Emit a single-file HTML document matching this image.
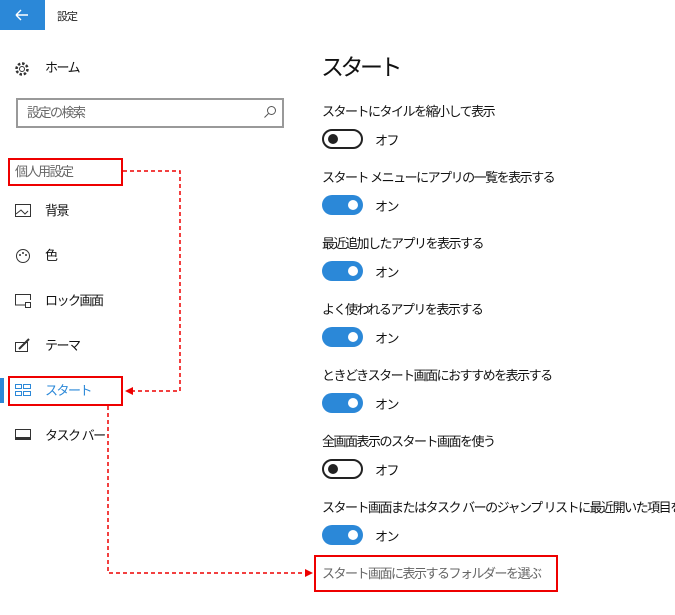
<!DOCTYPE html>
<html><head><meta charset="utf-8"><style>
*{margin:0;padding:0;box-sizing:border-box}
body{width:675px;height:615px;background:#fff;position:relative;overflow:hidden;font-family:"Liberation Sans","Noto Sans CJK JP",sans-serif;color:#111}
.a{position:absolute;white-space:nowrap}
.t{font-size:13px;line-height:18px;letter-spacing:-1.5px}
.tg{position:absolute;left:322px;width:41px;height:20px;border-radius:10px}
.on{background:#2b88d8}
.on::after{content:"";position:absolute;right:5px;top:5px;width:10px;height:10px;border-radius:5px;background:#fff}
.off{border:2px solid #222}
.off::after{content:"";position:absolute;left:4px;top:3px;width:10px;height:10px;border-radius:5px;background:#222}
.st{font-size:13px;left:375px;letter-spacing:-1.5px}
</style></head><body>
<div class="a" style="left:0;top:0;width:45px;height:30px;background:#2b88d8"></div>
<svg class="a" style="left:14px;top:8px" width="16" height="14"><path d="M2 7H14M2 7L7 2M2 7L7 12" stroke="#fff" stroke-width="1.4" fill="none"/></svg>
<div class="a" style="left:57px;top:8px;font-size:11px;color:#222;letter-spacing:-1px">設定</div>
<svg class="a" style="left:14px;top:61px" width="16" height="16" viewBox="0 0 16 16"><circle cx="8" cy="8" r="2.5" fill="none" stroke="#333"/><circle cx="8" cy="8" r="5.5" fill="none" stroke="#333" stroke-dasharray="2.5 1.8" stroke-width="2.5"/></svg>
<div class="a t" style="left:45px;top:59px">ホーム</div>
<div class="a" style="left:16px;top:98px;width:268px;height:30px;border:2px solid #999"></div>
<div class="a t" style="left:27px;top:104px;color:#666">設定の検索</div>
<svg class="a" style="left:263px;top:105px" width="14" height="14"><circle cx="8.5" cy="5.5" r="4" fill="none" stroke="#555"/><path d="M5.5 8.5L1.5 12.5" stroke="#555"/></svg>
<div class="a" style="left:8px;top:158px;width:115px;height:28px;border:2px solid #e00"></div>
<div class="a t" style="left:15px;top:163px;color:#666">個人用設定</div>
<svg class="a" style="left:15px;top:204px" width="16" height="13"><rect x="0.5" y="0.5" width="15" height="12" fill="none" stroke="#333"/><path d="M1 10L6 6L10 10L13 7" fill="none" stroke="#333"/></svg>
<div class="a t" style="left:45px;top:202px">背景</div>
<svg class="a" style="left:15px;top:248px" width="16" height="16"><circle cx="8" cy="8" r="6.5" fill="none" stroke="#333"/><circle cx="5" cy="7" r="1" fill="#333"/><circle cx="8" cy="5" r="1" fill="#333"/><circle cx="11" cy="7" r="1" fill="#333"/></svg>
<div class="a t" style="left:45px;top:247px">色</div>
<svg class="a" style="left:15px;top:294px" width="16" height="14"><path d="M10 11H0.5V0.5H15.5V6" fill="none" stroke="#333"/><rect x="10.5" y="8.5" width="5" height="5" fill="none" stroke="#333"/></svg>
<div class="a t" style="left:45px;top:292px">ロック画面</div>
<svg class="a" style="left:15px;top:338px" width="16" height="16"><rect x="0.5" y="4.5" width="12" height="9" fill="none" stroke="#333"/><path d="M4 11L14 1" stroke="#333" stroke-width="2"/></svg>
<div class="a t" style="left:45px;top:337px">テーマ</div>
<div class="a" style="left:0;top:378px;width:4px;height:25px;background:#2b88d8"></div>
<div class="a" style="left:8px;top:376px;width:115px;height:30px;border:2px solid #e00"></div>
<svg class="a" style="left:15px;top:384px" width="16" height="13"><g fill="none" stroke="#2b88d8"><rect x="0.5" y="0.5" width="6" height="4"/><rect x="8.5" y="0.5" width="7" height="4"/><rect x="0.5" y="7.5" width="6" height="4"/><rect x="8.5" y="7.5" width="7" height="4"/></g></svg>
<div class="a t" style="left:45px;top:382px;color:#2b88d8">スタート</div>
<svg class="a" style="left:15px;top:429px" width="16" height="12"><rect x="0.5" y="0.5" width="15" height="10" fill="none" stroke="#333"/><path d="M0 9H16" stroke="#333" stroke-width="2"/></svg>
<div class="a t" style="left:45px;top:427px">タスク バー</div>
<svg class="a" style="left:0;top:0" width="675" height="615"><g stroke="#e00" stroke-width="1.5" stroke-dasharray="4 3" fill="none"><path d="M123 171H180V391H132"/><path d="M108 406V573H306"/></g><path d="M125 391L133 387V395Z" fill="#e00"/><path d="M313 573L305 569V577Z" fill="#e00"/></svg>
<div class="a" style="left:321px;top:52px;font-size:23px;line-height:30px;letter-spacing:-3.5px">スタート</div>
<div class="a t" style="left:322px;top:103px">スタートにタイルを縮小して表示</div>
<div class="tg off" style="top:129px"></div><div class="a st" style="top:130px">オフ</div>
<div class="a t" style="left:322px;top:169px">スタート メニューにアプリの一覧を表示する</div>
<div class="tg on" style="top:195px"></div><div class="a st" style="top:196px">オン</div>
<div class="a t" style="left:322px;top:235px">最近追加したアプリを表示する</div>
<div class="tg on" style="top:261px"></div><div class="a st" style="top:262px">オン</div>
<div class="a t" style="left:322px;top:301px">よく使われるアプリを表示する</div>
<div class="tg on" style="top:327px"></div><div class="a st" style="top:328px">オン</div>
<div class="a t" style="left:322px;top:367px">ときどきスタート画面におすすめを表示する</div>
<div class="tg on" style="top:393px"></div><div class="a st" style="top:394px">オン</div>
<div class="a t" style="left:322px;top:433px">全画面表示のスタート画面を使う</div>
<div class="tg off" style="top:459px"></div><div class="a st" style="top:460px">オフ</div>
<div class="a t" style="left:322px;top:499px;width:353px;overflow:hidden">スタート画面またはタスク バーのジャンプ リストに最近開いた項目を表示する</div>
<div class="tg on" style="top:525px"></div><div class="a st" style="top:526px">オン</div>
<div class="a" style="left:314px;top:555px;width:244px;height:37px;border:2px solid #e00"></div>
<div class="a t" style="left:322px;top:565px;color:#666">スタート画面に表示するフォルダーを選ぶ</div>
</body></html>
